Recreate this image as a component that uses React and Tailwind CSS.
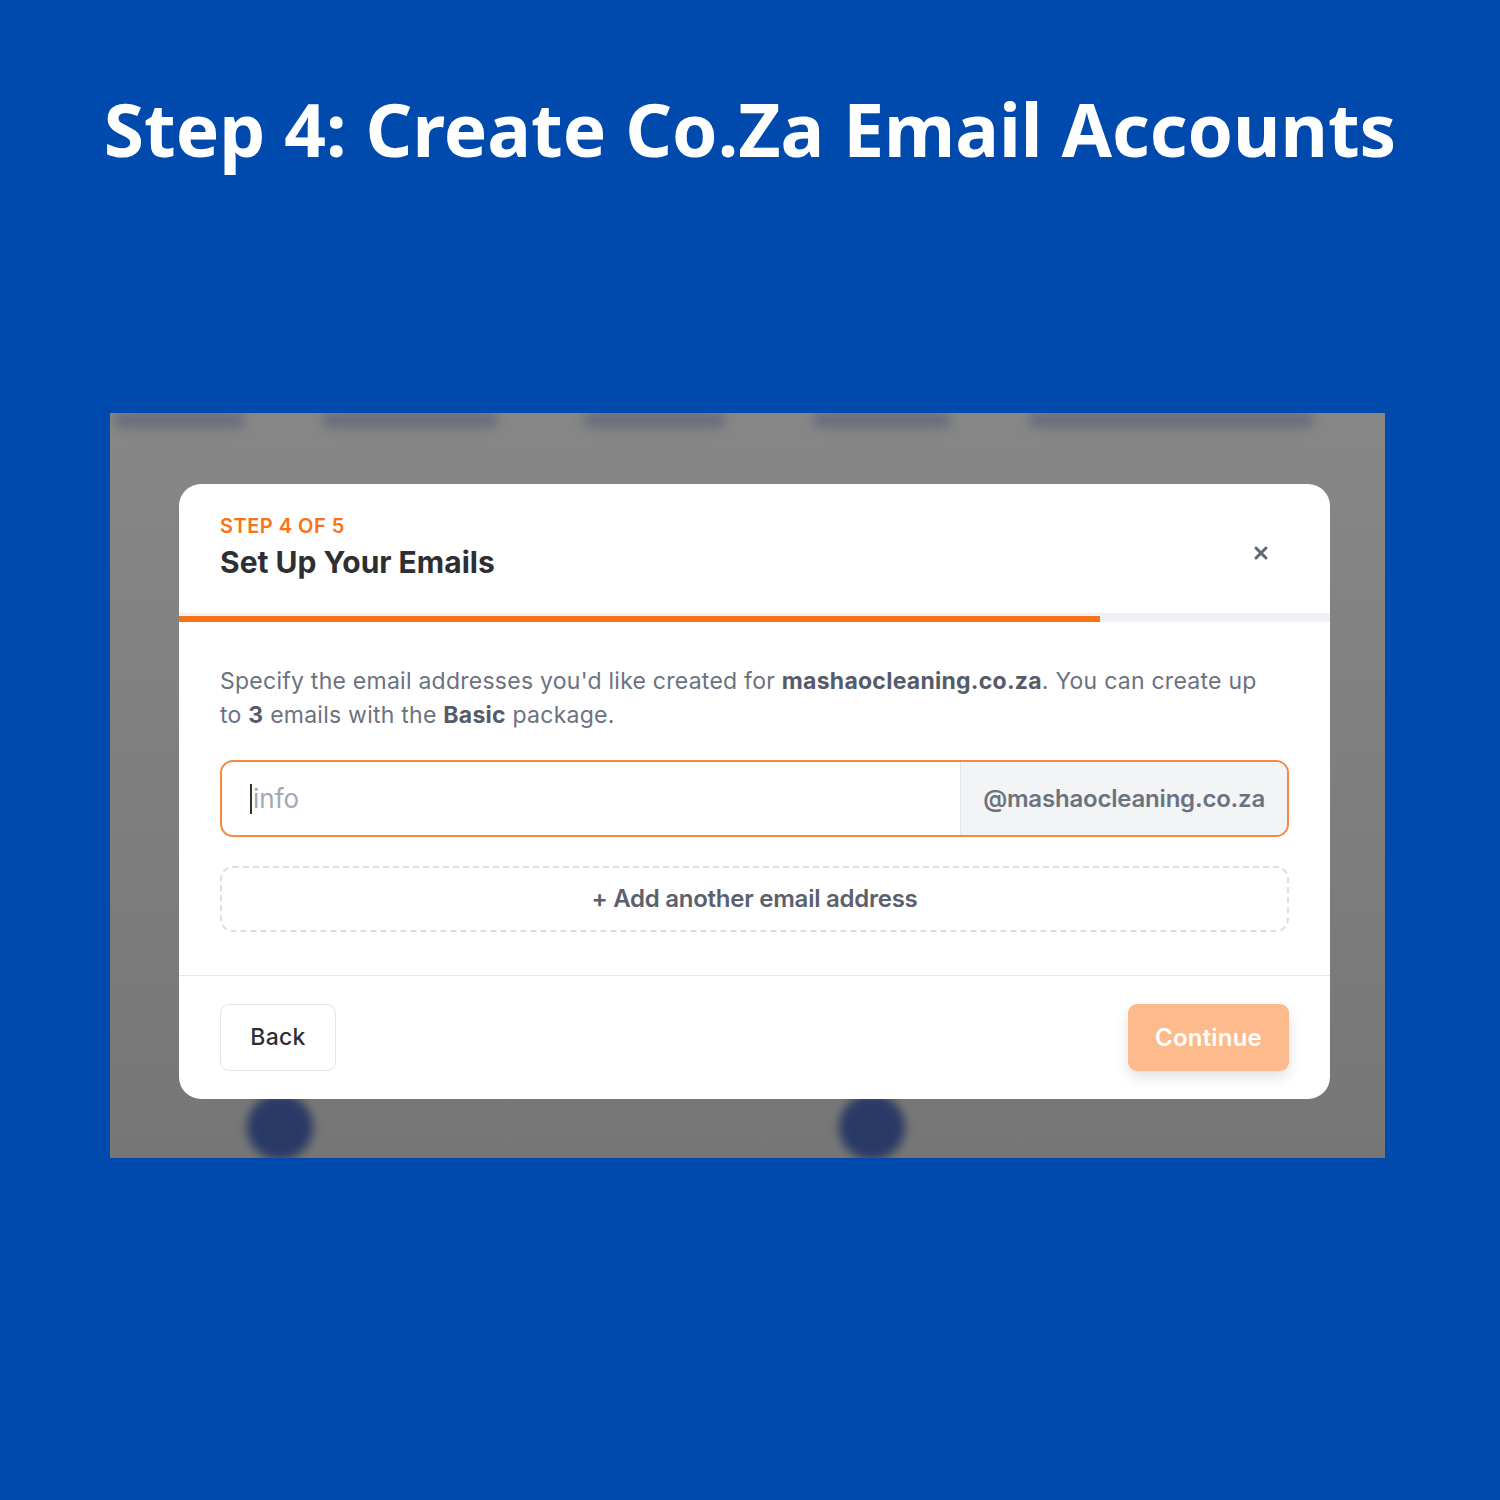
import React from 'react';

const font = { fontFamily: 'Inter, "Noto Sans", sans-serif' };

function CloseIcon() {
  return (
    <svg width="16" height="16" viewBox="0 0 16 16" className="text-[#5f6675]">
      <path d="M3 3 L13 13 M13 3 L3 13" stroke="currentColor" strokeWidth="3" strokeLinecap="round" />
    </svg>
  );
}

// blurred page sitting behind the dialog
function Backdrop() {
  const bars = [
    'left-[4px] w-[131px]',
    'left-[212px] w-[176px]',
    'left-[473px] w-[143px]',
    'left-[702px] w-[139px]',
    'left-[918px] w-[286px]',
  ];
  return (
    <>
      {bars.map((b) => (
        <div key={b} className={`absolute top-[0px] h-[14px] rounded-full bg-[#656a7a] blur-[6px] ${b}`} />
      ))}
      <div className="absolute left-[137px] top-[681px] w-[66px] h-[66px] rounded-full bg-[#2a3a66] blur-[5px]" />
      <div className="absolute left-[729px] top-[681px] w-[66px] h-[66px] rounded-full bg-[#2a3a66] blur-[5px]" />
    </>
  );
}

export default function App() {
  return (
    <div className="w-[1500px] h-[1500px] bg-[#004aad] flex flex-col items-start" style={font}>
      <h1
        className="w-full text-center text-white font-bold text-[73px] leading-none pt-[92px]"
        style={{ fontFamily: '"Noto Sans", "Open Sans", sans-serif' }}
      >
        Step 4: Create Co.Za Email Accounts
      </h1>

      <div className="relative overflow-hidden mt-[248px] ml-[110px] w-[1275px] h-[745px] bg-gradient-to-b from-[#878787] to-[#767676]">
        <Backdrop />

        <div className="relative mt-[71px] ml-[69px] w-[1151px] bg-white rounded-[22px] overflow-hidden">
          {/* header */}
          <div className="flex items-start justify-between px-[41px] pt-[30px] h-[129px]">
            <div className="flex flex-col">
              <span className="text-[20px] leading-[24px] font-semibold text-[#f97316] tracking-[0.5px]">STEP 4 OF 5</span>
              <span className="text-[30px] leading-[40px] font-bold text-[#2f2f33] mt-[4px]">
                Set Up Your Emails
              </span>
            </div>
            <div className="mt-[31px] mr-[20px]">
              <CloseIcon />
            </div>
          </div>

          {/* progress */}
          <div className="h-[9px] bg-[#eff1f5] flex items-end">
            <div className="h-[6px] w-[80%] bg-[#f97316]" />
          </div>

          {/* body */}
          <div className="px-[41px] pt-[42px] pb-[43px]">
            <p className="text-[23px] leading-[34px] text-[#6b7280] tracking-[0.25px]">
              Specify the email addresses you'd like created for{' '}
              <span className="font-bold text-[#555b69]">mashaocleaning.co.za</span>. You can create up
              <br />
              to <span className="font-bold text-[#555b69]">3</span> emails with the{' '}
              <span className="font-bold text-[#555b69]">Basic</span> package.
            </p>

            <div className="mt-[28px] h-[77px] flex border-2 border-[#f6893f] rounded-[13px] overflow-hidden">
              <div className="flex-1 flex items-center pl-[28px]">
                <span className="w-[2px] h-[30px] bg-[#333] mr-[1px]" />
                <span className="text-[26px] text-[#a3a8b3]">info</span>
              </div>
              <div className="flex items-center bg-[#f3f4f6] border-l border-[#e4e6ea] px-[22px]">
                <span className="text-[24px] font-semibold text-[#6b7280] tracking-[-0.2px]">@mashaocleaning.co.za</span>
              </div>
            </div>

            <div className="mt-[29px] h-[66px] flex items-center justify-center border-2 border-dashed border-[#dcdee3] rounded-[13px]">
              <span className="text-[24px] font-semibold text-[#5a606e] tracking-[-0.25px]">+ Add another email address</span>
            </div>
          </div>

          {/* footer */}
          <div className="border-t border-[#e5e7eb] flex items-center justify-between px-[41px] pt-[28px] pb-[28px]">
            <button className="h-[67px] w-[116px] rounded-[9px] border border-[#e3e5e8] bg-white text-[23px] font-medium text-[#2f2f33] tracking-[0.3px]">
              Back
            </button>
            <button className="h-[67px] w-[161px] rounded-[9px] bg-[#fdba8c] text-[24px] font-semibold text-white tracking-[0.2px] shadow-[0_6px_14px_rgba(0,0,0,0.12)]">
              Continue
            </button>
          </div>
        </div>
      </div>
    </div>
  );
}
